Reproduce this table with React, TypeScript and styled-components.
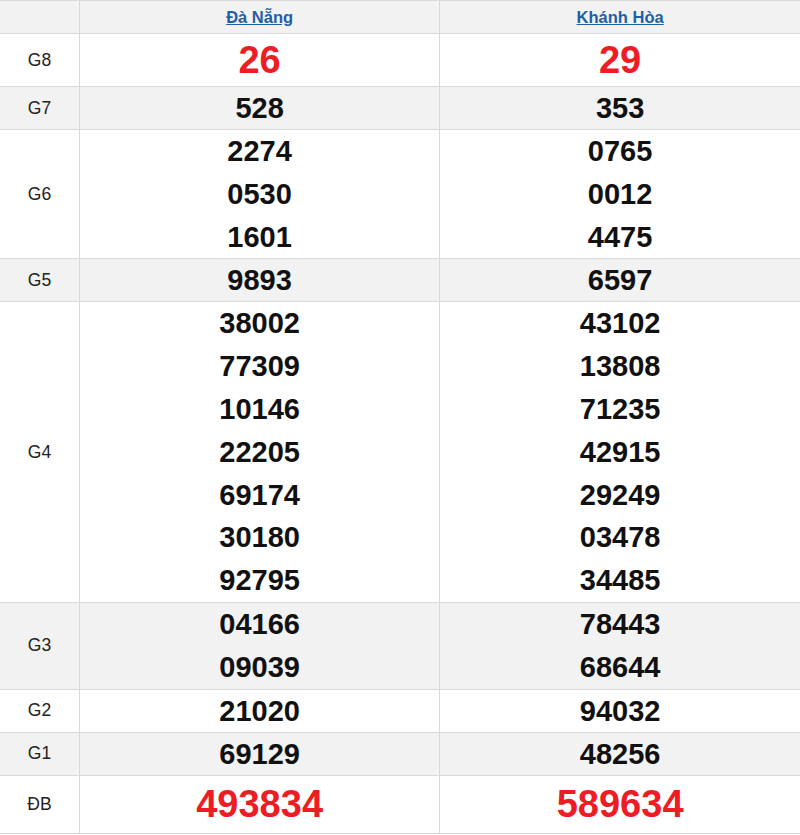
import styled, { createGlobalStyle } from "styled-components";

const Global = createGlobalStyle`
  body {
    margin: 0;
    background: #fff;
    font-family: "Liberation Sans", Arial, sans-serif;
  }
`;

const Table = styled.table`
  width: 800px;
  border-collapse: collapse;
  table-layout: fixed;
  font-family: "Liberation Sans", Arial, sans-serif;
`;

const Row = styled.tr<{ $gray?: boolean }>`
  background-color: ${(p) => (p.$gray ? "#f2f2f2" : "#fff")};
`;

const Label = styled.td`
  width: 79px;
  border: 1px solid #d9d9d9;
  border-left: none;
  text-align: center;
  font-size: 17.5px;
  color: #222;
  padding: 0;
`;

const Cell = styled.td`
  border: 1px solid #d9d9d9;
  text-align: center;
  padding: 0;
  &:last-child {
    border-right: none;
  }
`;

const HeadCell = styled(Cell)`
  height: 32px;
`;

const Province = styled.a`
  color: #1f5fa6;
  font-weight: bold;
  font-size: 16.5px;
  text-decoration: underline;
`;

const Num = styled.div<{ $big?: boolean; $red?: boolean; $multi?: boolean }>`
  font-family: "Liberation Sans", Arial, sans-serif;
  font-weight: bold;
  font-size: ${(p) => (p.$big ? "38px" : "29px")};
  line-height: ${(p) => (p.$big ? "52px" : p.$multi ? "42.8px" : "42px")};
  color: ${(p) => (p.$red ? "#ee1c25" : "#111")};
`;

type Prize = { name: string; a: string[]; b: string[]; big?: boolean; h?: number };

const prizes: Prize[] = [
  { name: "G8", a: ["26"], b: ["29"], big: true },
  { name: "G7", a: ["528"], b: ["353"] },
  { name: "G6", a: ["2274", "0530", "1601"], b: ["0765", "0012", "4475"] },
  { name: "G5", a: ["9893"], b: ["6597"] },
  {
    name: "G4",
    a: ["38002", "77309", "10146", "22205", "69174", "30180", "92795"],
    b: ["43102", "13808", "71235", "42915", "29249", "03478", "34485"],
  },
  { name: "G3", a: ["04166", "09039"], b: ["78443", "68644"] },
  { name: "G2", a: ["21020"], b: ["94032"] },
  { name: "G1", a: ["69129"], b: ["48256"] },
  { name: "ĐB", a: ["493834"], b: ["589634"], big: true, h: 57 },
];

const App = () => {
  return (
    <>
      <Global />
      <Table>
        <tbody>
          <Row $gray>
            <Label />
            <HeadCell>
              <Province href="#">Đà Nẵng</Province>
            </HeadCell>
            <HeadCell>
              <Province href="#">Khánh Hòa</Province>
            </HeadCell>
          </Row>
          {prizes.map((p, i) => (
            <Row key={p.name} $gray={i % 2 === 1}>
              <Label>{p.name}</Label>
              {[p.a, p.b].map((col, j) => (
                <Cell key={j}>
                  {col.map((n) => (
                    <Num
                      key={n}
                      $big={p.big}
                      $red={p.big}
                      $multi={col.length > 1}
                      style={p.h ? { lineHeight: p.h + "px" } : undefined}
                    >
                      {n}
                    </Num>
                  ))}
                </Cell>
              ))}
            </Row>
          ))}
        </tbody>
      </Table>
    </>
  );
};

export default App;
